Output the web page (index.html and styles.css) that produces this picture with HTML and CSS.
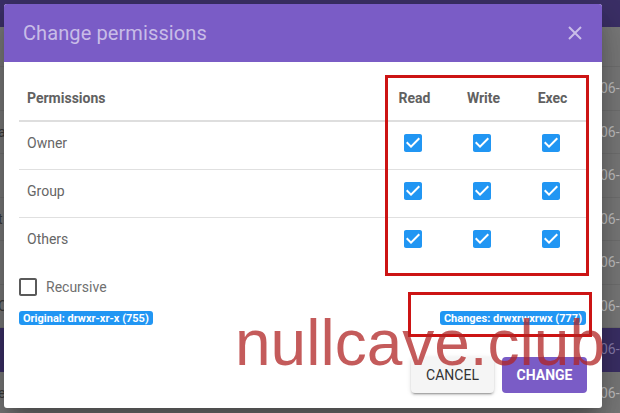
FILE: index.html
```html
<!DOCTYPE html>
<html>
<head>
<meta charset="utf-8">
<link rel="stylesheet" href="styles.css">
</head>
<body>
<div class="bg">
  <div class="bg-top"></div>
  <div class="bg-head"></div>
  <div class="bg-row"><span class="frag"></span><span class="date">06-06-2020</span></div>
  <div class="bg-row"><span class="frag">a</span><span class="date">06-06-2020</span></div>
  <div class="bg-row"><span class="frag"></span><span class="date">06-06-2020</span></div>
  <div class="bg-row"><span class="frag">t</span><span class="date">06-06-2020</span></div>
  <div class="bg-row"><span class="frag"></span><span class="date">06-06-2020</span></div>
  <div class="bg-row"><span class="frag">C</span><span class="date">06-06-2020</span></div>
  <div class="bg-row bg-row-sel"><span class="frag"></span><span class="date">06-06-2020</span></div>
  <div class="bg-row"><span class="frag">e</span><span class="date">06-06-2020</span></div>
</div>

<div class="dialog">
  <div class="dlg-head">
    <span class="dlg-title">Change permissions</span>
    <svg class="close" width="14" height="14" viewBox="0 0 14 14"><path d="M1 1L13 13M13 1L1 13" stroke="currentColor" stroke-width="2" fill="none"/></svg>
  </div>
  <div class="dlg-body">
    <div class="perm-table">
      <div class="cell head first">Permissions</div>
      <div class="cell head col">Read</div>
      <div class="cell head col">Write</div>
      <div class="cell head col">Exec</div>

      <div class="cell row first">Owner</div>
      <div class="cell row col"><svg class="cb" width="24" height="24" viewBox="0 0 24 24"><path d="M19 3H5c-1.11 0-2 .9-2 2v14c0 1.1.89 2 2 2h14c1.11 0 2-.9 2-2V5c0-1.1-.89-2-2-2zm-9 14l-5-5 1.410-1.41L10 14.170l7.59-7.590L19 8l-9 9z"/></svg></div>
      <div class="cell row col"><svg class="cb" width="24" height="24" viewBox="0 0 24 24"><path d="M19 3H5c-1.11 0-2 .9-2 2v14c0 1.1.89 2 2 2h14c1.11 0 2-.9 2-2V5c0-1.1-.89-2-2-2zm-9 14l-5-5 1.410-1.41L10 14.170l7.59-7.590L19 8l-9 9z"/></svg></div>
      <div class="cell row col"><svg class="cb" width="24" height="24" viewBox="0 0 24 24"><path d="M19 3H5c-1.11 0-2 .9-2 2v14c0 1.1.89 2 2 2h14c1.11 0 2-.9 2-2V5c0-1.1-.89-2-2-2zm-9 14l-5-5 1.410-1.41L10 14.170l7.59-7.590L19 8l-9 9z"/></svg></div>

      <div class="cell row first">Group</div>
      <div class="cell row col"><svg class="cb" width="24" height="24" viewBox="0 0 24 24"><path d="M19 3H5c-1.11 0-2 .9-2 2v14c0 1.1.89 2 2 2h14c1.11 0 2-.9 2-2V5c0-1.1-.89-2-2-2zm-9 14l-5-5 1.410-1.41L10 14.170l7.59-7.590L19 8l-9 9z"/></svg></div>
      <div class="cell row col"><svg class="cb" width="24" height="24" viewBox="0 0 24 24"><path d="M19 3H5c-1.11 0-2 .9-2 2v14c0 1.1.89 2 2 2h14c1.11 0 2-.9 2-2V5c0-1.1-.89-2-2-2zm-9 14l-5-5 1.410-1.41L10 14.170l7.59-7.590L19 8l-9 9z"/></svg></div>
      <div class="cell row col"><svg class="cb" width="24" height="24" viewBox="0 0 24 24"><path d="M19 3H5c-1.11 0-2 .9-2 2v14c0 1.1.89 2 2 2h14c1.11 0 2-.9 2-2V5c0-1.1-.89-2-2-2zm-9 14l-5-5 1.410-1.41L10 14.170l7.59-7.590L19 8l-9 9z"/></svg></div>

      <div class="cell row last first">Others</div>
      <div class="cell row last col"><svg class="cb" width="24" height="24" viewBox="0 0 24 24"><path d="M19 3H5c-1.11 0-2 .9-2 2v14c0 1.1.89 2 2 2h14c1.11 0 2-.9 2-2V5c0-1.1-.89-2-2-2zm-9 14l-5-5 1.410-1.41L10 14.170l7.59-7.590L19 8l-9 9z"/></svg></div>
      <div class="cell row last col"><svg class="cb" width="24" height="24" viewBox="0 0 24 24"><path d="M19 3H5c-1.11 0-2 .9-2 2v14c0 1.1.89 2 2 2h14c1.11 0 2-.9 2-2V5c0-1.1-.89-2-2-2zm-9 14l-5-5 1.410-1.41L10 14.170l7.59-7.590L19 8l-9 9z"/></svg></div>
      <div class="cell row last col"><svg class="cb" width="24" height="24" viewBox="0 0 24 24"><path d="M19 3H5c-1.11 0-2 .9-2 2v14c0 1.1.89 2 2 2h14c1.11 0 2-.9 2-2V5c0-1.1-.89-2-2-2zm-9 14l-5-5 1.410-1.41L10 14.170l7.59-7.590L19 8l-9 9z"/></svg></div>
    </div>

    <div class="recursive">
      <svg class="cb-off" width="24" height="24" viewBox="0 0 24 24"><path d="M19 5v14H5V5h14m0-2H5c-1.1 0-2 .9-2 2v14c0 1.1.9 2 2 2h14c1.1 0 2-.9 2-2V5c0-1.1-.9-2-2-2z"/></svg>
      <span>Recursive</span>
    </div>

    <div class="badges">
      <span class="badge">Original: drwxr-xr-x (755)</span>
      <span class="badge">Changes: drwxrwxrwx (777)</span>
    </div>

    <div class="actions">
      <button class="btn btn-cancel">CANCEL</button>
      <button class="btn btn-change">CHANGE</button>
    </div>
  </div>
</div>

<div class="mark mark-table"></div>
<div class="mark mark-changes"></div>
<div class="watermark">nullcave.club</div>
</body>
</html>
```

FILE: styles.css
```css
html, body {
  margin: 0;
  padding: 0;
}
body {
  width: 620px;
  height: 413px;
  overflow: hidden;
  position: relative;
  background: #7b7b7b;
  font-family: Roboto, "Liberation Sans", sans-serif;
}

/* dimmed background app */
.bg {
  display: flex;
  flex-direction: column;
}
.bg-top {
  height: 27px;
  background: #3c3068;
}
.bg-head {
  height: 40px;
  border-bottom: 1px solid #727272;
  box-sizing: border-box;
}
.bg-row {
  height: 43.5px;
  box-sizing: border-box;
  border-bottom: 1px solid #727272;
  display: flex;
  align-items: center;
  justify-content: space-between;
  font-size: 14px;
  color: #3a3a3a;
}
.bg-row-sel {
  background: #3c3068;
  border-bottom-color: #3c3068;
}
.frag {
  margin-left: -2px;
  color: #3b3b3b;
}
.date {
  width: 20px;
  overflow: hidden;
  white-space: nowrap;
  color: #c4c4c4;
}
.bg-row-sel .date {
  color: #8a7fb0;
}

/* dialog */
.dialog {
  position: absolute;
  left: 4px;
  top: 4px;
  width: 598px;
  height: 404px;
  background: #fff;
  border-radius: 3px;
  overflow: hidden;
  box-shadow: 0 11px 15px -7px rgba(0,0,0,.25), 0 24px 38px 3px rgba(0,0,0,.16), 0 9px 46px 8px rgba(0,0,0,.14);
}
.dlg-head {
  height: 58px;
  background: #7a5cc6;
  display: flex;
  align-items: center;
  justify-content: space-between;
  padding: 0 20px 0 19px;
  color: rgba(255,255,255,0.6);
}
.dlg-title {
  font-size: 20px;
  letter-spacing: 0.1px;
}
.close {
  display: block;
}

.dlg-body {
  padding: 12px 13px 0 15px;
}

.perm-table {
  display: grid;
  grid-template-columns: 1fr 69px 69px 73px;
}
.cell {
  display: flex;
  align-items: center;
  box-sizing: border-box;
  color: #666;
}
.cell.head {
  height: 48px;
  border-bottom: 2px solid #dedede;
  font-size: 14px;
  font-weight: 700;
  color: #616161;
  padding-top: 2px;
}
.cell.first {
  padding-left: 8px;
}
.cell.col {
  justify-content: center;
}
.cell.col:nth-child(4n) {
  padding-right: 4px;
}
.cell.head.col {
  padding-left: 4px;
}
.cell.row {
  height: 48px;
  border-bottom: 1px solid #e0e0e0;
  padding-bottom: 6px;
  font-size: 14px;
}
.cell.row.last {
  border-bottom: none;
  height: 47px;
}
.cb {
  display: block;
  fill: #2196f3;
}

.recursive {
  display: flex;
  align-items: center;
  height: 18px;
  margin-top: 13px;
  margin-left: -3px;
  font-size: 14px;
  color: #707070;
}
.cb-off {
  display: block;
  fill: #5a5a5a;
  margin-right: 6px;
}

.badges {
  display: flex;
  justify-content: space-between;
  margin-top: 15px;
  margin-right: 3px;
}
.badge {
  display: inline-flex;
  align-items: center;
  height: 14px;
  padding: 0 4px;
  border-radius: 3px;
  background: #2196f3;
  color: #fff;
  font-size: 11px;
  font-weight: 700;
}

.actions {
  display: flex;
  justify-content: flex-end;
  gap: 8px;
  margin-top: 32px;
  margin-right: 2px;
}
.btn {
  height: 36px;
  border: none;
  border-radius: 4px;
  font-family: Roboto, "Liberation Sans", sans-serif;
  font-size: 14px;
  padding: 0;
}
.btn-cancel {
  width: 83px;
  background: #f5f5f5;
  color: #333;
  font-weight: 400;
  box-shadow: 0 3px 1px -2px rgba(0,0,0,.2), 0 2px 2px 0 rgba(0,0,0,.14), 0 1px 5px 0 rgba(0,0,0,.12);
}
.btn-change {
  width: 85px;
  background: #7a5cc6;
  color: #fff;
  font-weight: 700;
}

/* annotations over the picture */
.mark {
  position: absolute;
  border: 3px solid #cc1414;
  box-sizing: border-box;
}
.mark-table {
  left: 385px;
  top: 75px;
  width: 204px;
  height: 201px;
}
.mark-changes {
  left: 408px;
  top: 292px;
  width: 184px;
  height: 45px;
}
.watermark {
  position: absolute;
  left: 235px;
  top: 306px;
  font-family: "Liberation Sans", Arial, sans-serif;
  font-size: 64px;
  line-height: 74px;
  color: rgba(176, 36, 36, 0.75);
  white-space: nowrap;
}
```
